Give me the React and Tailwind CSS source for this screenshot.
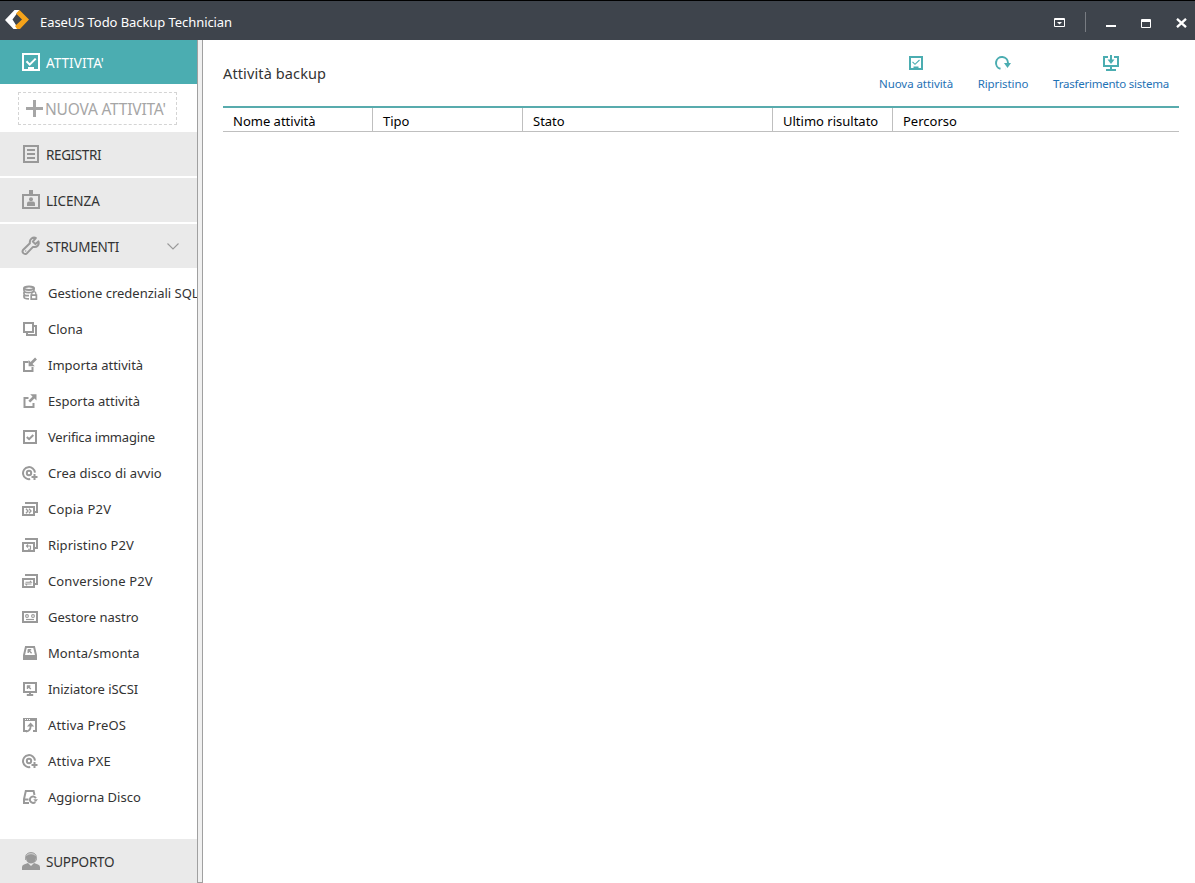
import React, { useState } from "react";

const Icon = ({ size = 16, children, className = "" }) => (
  <svg
    width={size}
    height={size}
    viewBox={`0 0 ${size} ${size}`}
    fill="none"
    stroke="currentColor"
    strokeWidth="2"
    className={`shrink-0 ${className}`}
  >
    {children}
  </svg>
);

const DiscPlus = () => (
  <Icon>
    <path d="M8.2 14A6 6 0 1 1 13 7.6" />
    <circle cx="7" cy="8" r="2.2" strokeWidth="2" />
    <path d="M12.5 9v6M9.5 12h6" />
  </Icon>
);

const Stack = ({ children }) => (
  <Icon>
    <path d="M4 3V2h11v9h-2" />
    <path d="M1 6h11v8H1z" />
    {children}
  </Icon>
);

const tools = [
  {
    label: "Gestione credenziali SQL",
    icon: (
      <Icon>
        <ellipse cx="7" cy="3.2" rx="5" ry="1.7" strokeWidth="2" />
        <path
          d="M2 3v2.5c0 1.5 2 2.2 4.5 2.2 3 0 5.2-.6 5.4-1.8V3M2 7v2c0 1 2 1.7 5 1.7M2 10v2c0 1.2 2 1.9 5 1.9"
          strokeWidth="1.7"
        />
        <path d="M9.8 10V8.6a2 2 0 0 1 4 0V10" strokeWidth="1.3" />
        <path d="M9.2 10.2h5.2v4H9.2z" strokeWidth="1.7" />
      </Icon>
    ),
  },
  {
    label: "Clona",
    icon: (
      <Icon>
        <path d="M2 2h9v9H2zM12 5h2v9H5v-2" />
      </Icon>
    ),
  },
  {
    label: "Importa attività",
    icon: (
      <Icon>
        <path d="M6.5 5H2v9h8.5V10" strokeWidth="2" />
        <path d="M14 1.5L9 6.5" strokeWidth="2.6" />
        <path d="M6.6 3v6.2h6.2z" fill="currentColor" stroke="none" />
      </Icon>
    ),
  },
  {
    label: "Esporta attività",
    icon: (
      <Icon>
        <path d="M6.5 5H2.5v9h9V10" strokeWidth="2" />
        <path d="M7.3 8.7L12 4" strokeWidth="2.6" />
        <path d="M8.2 1.2H14.5V7.5z" fill="currentColor" stroke="none" />
      </Icon>
    ),
  },
  {
    label: "Verifica immagine",
    tracking: "tracking-[-0.18px]",
    icon: (
      <Icon>
        <path d="M2 2h12v12H2z" />
        <path d="M4.8 8l2.3 2.2L11.3 6" />
      </Icon>
    ),
  },
  { label: "Crea disco di avvio", tracking: "tracking-[0.05px]", icon: <DiscPlus /> },
  {
    label: "Copia P2V",
    tracking: "tracking-[0.22px]",
    icon: (
      <Stack>
        <path d="M4 7.8L6 10 4 12.2M7 7.8L9 10 7 12.2" strokeWidth="1.3" />
      </Stack>
    ),
  },
  {
    label: "Ripristino P2V",
    tracking: "tracking-[0.08px]",
    icon: (
      <Stack>
        <path d="M6 7.5L4.5 9 6 10.5M4.5 9h4v3.2H6" strokeWidth="1.1" />
      </Stack>
    ),
  },
  {
    label: "Conversione P2V",
    tracking: "tracking-[0.13px]",
    icon: (
      <Stack>
        <path d="M3.5 9.2h5.8L8 7.8M9.5 11H3.7L5 12.4" strokeWidth="1.1" />
      </Stack>
    ),
  },
  {
    label: "Gestore nastro",
    icon: (
      <Icon>
        <path d="M1 3h14v10H1z" />
        <circle cx="5" cy="7" r="1.4" strokeWidth="1.1" />
        <circle cx="11" cy="7" r="1.4" strokeWidth="1.1" />
        <path d="M4 10.5h8" strokeWidth="1.2" />
      </Icon>
    ),
  },
  {
    label: "Monta/smonta",
    tracking: "tracking-[0.08px]",
    icon: (
      <Icon>
        <path d="M3.9 2h8.2L14 10v4H2v-4z" />
        <path d="M2 12h12" strokeWidth="4" />
        <path d="M5.8 4.8h3.4M6.2 4.8v3.2M6.4 5l3.2 3.2" strokeWidth="1.4" />
      </Icon>
    ),
  },
  {
    label: "Iniziatore iSCSI",
    tracking: "tracking-[-0.07px]",
    icon: (
      <Icon>
        <path d="M2 2h12v9H2zM8 11v3M4.8 14h6.4" />
        <path d="M5 5h3.4M5.5 4.5V8M5.8 5l3 3" strokeWidth="1.4" />
      </Icon>
    ),
  },
  {
    label: "Attiva PreOS",
    tracking: "tracking-[0.18px]",
    icon: (
      <Icon>
        <path d="M2 2v12h3M14 2v12h-3" />
        <path d="M1 2.5h14" strokeWidth="3" />
        <path d="M3 2.5h5" stroke="#fff" strokeWidth="1" strokeDasharray="1 1" />
        <path d="M4 14.6c3-.2 4.6-1.8 4.6-5.5" strokeWidth="1.8" />
        <path d="M5 9.6L8.6 5.4l3.6 4.2z" fill="currentColor" stroke="none" />
      </Icon>
    ),
  },
  { label: "Attiva PXE", tracking: "tracking-[0.22px]", icon: <DiscPlus /> },
  {
    label: "Aggiorna Disco",
    icon: (
      <Icon>
        <path d="M12.5 6L11.6 2H3.8L2 10v4h5M2 10.4h4.5" strokeWidth="2" />
        <path d="M13.9 9.2a3.2 3.2 0 1 0-.6 3.8" strokeWidth="2" />
        <path d="M11.2 10.2h4.8l-2.2 2.8z" fill="currentColor" stroke="none" />
      </Icon>
    ),
  },
];

const columns = [
  { label: "Nome attività", width: "w-[150px]" },
  { label: "Tipo", width: "w-[150px]" },
  { label: "Stato", width: "w-[250px]" },
  { label: "Ultimo risultato", width: "w-[120px]" },
  { label: "Percorso", width: "flex-1" },
];

const TitleBar = () => (
  <header className="flex h-10 shrink-0 items-center border-t border-black bg-[#3e444c] pl-1 pr-2 text-white">
    <svg width="25" height="22" viewBox="0 0 25 22" className="mb-px">
      <path d="M10.5 1h5L8.5 10.5l6 9.5h-5L1 11z" fill="#fff" />
      <path d="M15.5 1L25 10.5 16 20h-3l-2-3 7-6.5-6-6z" fill="#f5a31a" />
    </svg>
    <span className="ml-[11px] pt-[3px] text-[13px] leading-5 tracking-[-0.07px]">
      EaseUS Todo Backup Technician
    </span>
    <div className="ml-auto flex items-center pt-[5px]">
      <svg width="12" height="10" viewBox="0 0 12 10" fill="none" stroke="#fff">
        <path d="M.5 .5h10v8H.5zM0 1.5h11" />
        <path d="M3 4h5L5.500 6.500z" fill="#fff" stroke="none" />
      </svg>
      <div className="-mt-0.5 ml-[19px] h-5 w-px bg-[#787c82]" />
      <svg width="10" height="10" className="ml-5">
        <path d="M0 7h10v2H0z" fill="#fff" />
      </svg>
      <svg width="10" height="9" className="ml-[25px]" fill="none" stroke="#fff">
        <path d="M.5 .5h9v8h-9zM0 1.5h10M0 2.5h10" />
      </svg>
      <svg width="11" height="10" className="-mt-px ml-[25px]" fill="none" stroke="#fff" strokeWidth="2.3">
        <path d="M1 .8l9 8.4M10 .8L1 9.2" />
      </svg>
    </div>
  </header>
);

const NavItem = ({ icon, label, active, onClick, tracking = "tracking-[-0.25px]", children }) => (
  <button
    onClick={onClick}
    className={`flex h-11 w-full shrink-0 items-center pl-[21px] text-left ${
      active ? "bg-[#4badb1] text-white" : "bg-[#eaeaea] text-[#999]"
    }`}
  >
    {icon}
    <span className={`ml-[5px] pt-0.5 text-[13.5px] ${tracking} ${active ? "text-white" : "text-[#333]"}`}>
      {label}
    </span>
    {children}
  </button>
);

const Sidebar = () => {
  const [open, setOpen] = useState(true);

  return (
    <aside className="flex w-[197px] shrink-0 flex-col overflow-hidden bg-white">
      <NavItem
        active
        label="ATTIVITA'"
        tracking="tracking-[0.05px]"
        icon={
          <Icon size={20}>
            <path d="M2 2h16v16H2z" />
            <path d="M5.5 9.2l3.2 3.4 6-6" />
            <path d="M7 16.500h6" strokeWidth="3" />
          </Icon>
        }
      />
      <div className="h-12 shrink-0 pl-[18px] pt-2">
        <button className="flex h-[33px] w-[159px] items-center border border-dashed border-[#d4d4d4] pl-[7px] text-[#a6a6a6]">
          <Icon size={17}>
            <path d="M8.5 0v17M0 8.5h17" strokeWidth="3" />
          </Icon>
          <span className="ml-[2px] whitespace-nowrap pt-0.5 text-[15.5px] tracking-[-0.2px]">NUOVA ATTIVITA'</span>
        </button>
      </div>
      <div className="flex shrink-0 flex-col gap-0.5">
        <NavItem
          label="REGISTRI"
          tracking="tracking-[-0.38px]"
          icon={
            <Icon size={20}>
              <path d="M3 2h14v16H3z" />
              <path d="M6 6h8M6 10h8M6 14h8" />
            </Icon>
          }
        />
        <NavItem
          label="LICENZA"
          tracking="tracking-[-0.08px]"
          icon={
            <Icon size={20}>
              <path d="M2 5h16v13H2z" />
              <path d="M8 0h4v5H8zM6 16v-2.5q0-2 2-2h4q2 0 2 2V16z" fill="currentColor" stroke="none" />
              <circle cx="10" cy="9.3" r="2" fill="currentColor" stroke="none" />
            </Icon>
          }
        />
        <NavItem
          label="STRUMENTI"
          onClick={() => setOpen(!open)}
          icon={
            <Icon size={20}>
              <path
                d="M14.8 2C12 .8 8.2 3 8.9 7.2L2 14c-1.4 2.3 1 4.9 3.6 3.6L12 10.9c4 1 6.6-2.2 5.4-5.5l-3 2.7-2.6-2.5z"
                strokeLinejoin="round"
              />
              <circle cx="4.7" cy="15" r=".7" fill="currentColor" stroke="none" />
            </Icon>
          }
        >
          <svg width="12" height="7" className="ml-auto mr-[18px]" fill="none" stroke="#999" strokeWidth="1.1">
            <path d="M.5 .5L6 6 11.5 .5" />
          </svg>
        </NavItem>
      </div>
      {open && (
        <ul className="pt-[7px]">
          {tools.map((tool) => (
            <li key={tool.label} className="flex h-9 items-center pl-[22px] text-[#999]">
              {tool.icon}
              <span className={`ml-2.5 whitespace-nowrap pt-0.5 text-[13px] text-[#333] ${tool.tracking || ""}`}>
                {tool.label}
              </span>
            </li>
          ))}
        </ul>
      )}
      <div className="mt-auto">
        <NavItem
          label="SUPPORTO"
          icon={
            <Icon size={20}>
              <path
                d="M1 19v-3q0-2 2-2.6l4-1.4 3 3 3-3 4 1.4q2 .6 2 2.6v3zM5 5.5Q5 2 10 2t5 3.5V7q0 3-2 4.5-3 2.2-6 0Q5 10 5 7z"
                fill="currentColor"
                stroke="none"
              />
              <path d="M4.7 9V5.5C5 .3 15 .3 15.3 5.5V9l-2 2.4" strokeWidth="1" />
              <path d="M5.5 4.3q4.5-3.3 9 0" stroke="#eaeaea" strokeWidth=".7" />
            </Icon>
          }
        />
      </div>
    </aside>
  );
};

const ToolbarButton = ({ icon, label, width, tracking = "" }) => (
  <button className={`flex flex-col items-center text-[#4badb1] ${width}`}>
    {icon}
    <span className={`mt-[3px] whitespace-nowrap text-[11.5px] leading-4 text-[#1f72b5] ${tracking}`}>{label}</span>
  </button>
);

const App = () => {
  return (
    <div className="flex h-[883px] w-[1195px] flex-col overflow-hidden bg-white font-['Noto_Sans','Open_Sans',sans-serif]">
      <TitleBar />
      <div className="flex min-h-0 flex-1">
        <Sidebar />
        <div className="w-1.5 shrink-0 border-x border-b border-[#a0a0a0] bg-[#f0f0f0]" />
        <main className="flex-1 pl-5 pr-4">
          <div className="flex h-[66px] justify-between pr-2.5">
            <h1 className="pt-[22px] text-[14.5px] leading-[22px] tracking-[0.12px] text-[#333]">Attività backup</h1>
            <div className="flex gap-[25px] pt-[13px]">
              <ToolbarButton
                label="Nuova attività"
                width="w-[74px]"
                tracking="tracking-[-0.07px]"
                icon={
                  <Icon size={20}>
                    <path d="M4 4h12v12H4z" />
                    <path d="M6.5 8.8l2.5 2.5 4.5-4.3" strokeWidth="1.1" />
                    <path d="M7.5 14.5h5" />
                  </Icon>
                }
              />
              <ToolbarButton
                label="Ripristino"
                width="w-[50px]"
                tracking="tracking-[-0.1px]"
                icon={
                  <Icon size={20}>
                    <path d="M7.5 15.8A6 6 0 1 1 15 10M12 15.8h.1" />
                    <path d="M11 10h7l-3.5 5z" fill="currentColor" stroke="none" />
                  </Icon>
                }
              />
              <ToolbarButton
                label="Trasferimento sistema"
                width="w-[116px]"
                tracking="tracking-[-0.23px]"
                icon={
                  <Icon size={20}>
                    <path d="M7 4H3v9h14V4h-4M10 13v4M5 17h10" />
                    <path d="M10 2v6" />
                    <path d="M6.5 6.5h7L10 11z" fill="currentColor" stroke="none" />
                  </Icon>
                }
              />
            </div>
          </div>
          <div className="flex h-[26px] border-b border-t-2 border-b-[#bfbfbf] border-t-[#58abad]">
            {columns.map((col) => (
              <div
                key={col.label}
                className={`shrink-0 whitespace-nowrap border-r border-[#bfbfbf] pl-2.5 text-[13px] leading-[27px] text-black last:border-r-0 ${col.width}`}
              >
                {col.label}
              </div>
            ))}
          </div>
        </main>
      </div>
    </div>
  );
};

export default App;
